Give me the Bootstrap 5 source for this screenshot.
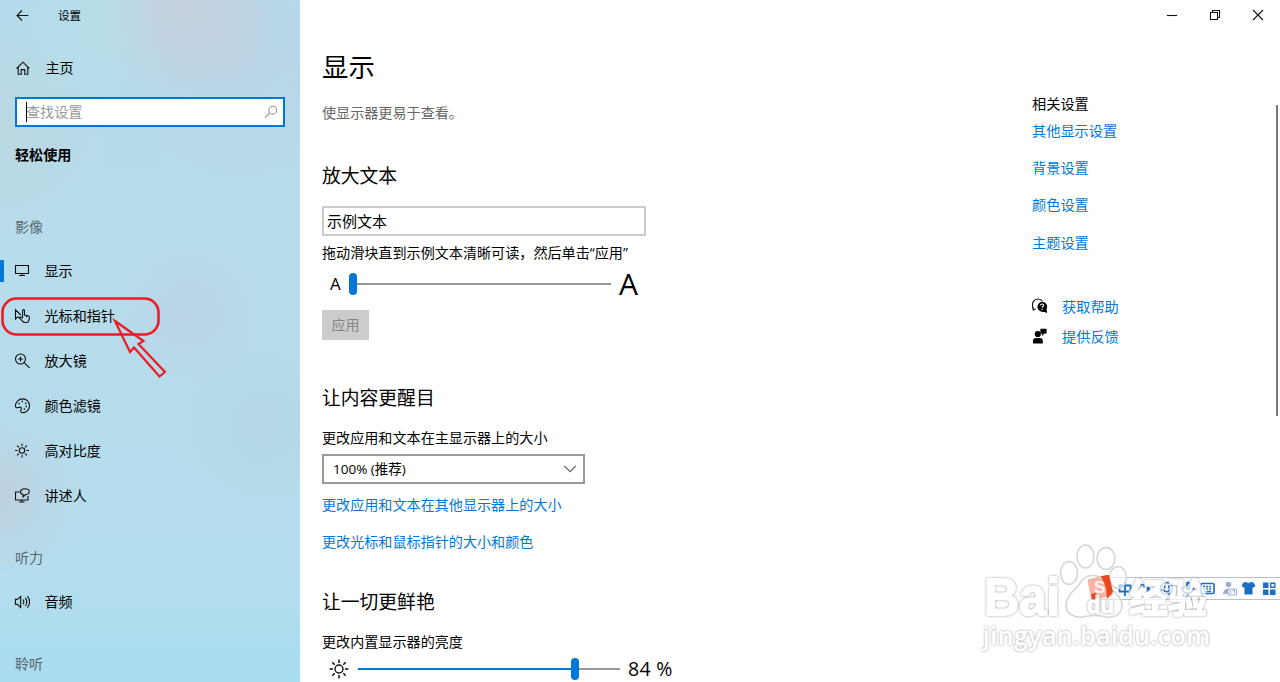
<!DOCTYPE html>
<html lang="zh-CN">
<head>
  <meta charset="UTF-8" />
  <title>设置</title>
  <meta name="viewport" content="width=device-width, initial-scale=1.0" />
  <link href="https://cdn.jsdelivr.net/npm/bootstrap@5.3.0/dist/css/bootstrap.min.css" rel="stylesheet" />
  <style>
    body { font-family: "Open Sans", "Noto Sans CJK SC", sans-serif; font-size: 14.1px; color: #000; background: #fff; height: 682px; }
    svg { display: block; flex: none; fill: none; stroke: #111; stroke-width: 1.1; }
    a { color: #0078d7; text-decoration: none; }

    .side {
      width: 300px; flex: none;
      background:
        radial-gradient(circle 95px at 185px 8px, #cdcbdaaa, #cdcbda00),
        radial-gradient(ellipse 130px 130px at 240px 60px, #bfcfe088, #bfcfe000),
        radial-gradient(circle 90px at 95px 25px, #b9e4e577, #b9e4e500),
        radial-gradient(circle 80px at 0 495px, #c2c9d8aa, #c2c9d800),
        radial-gradient(circle 75px at 190px 315px, #bccde4aa, #bccde400),
        radial-gradient(circle 110px at 0 125px, #bfd6dcaa, #bfd6dc00),
        radial-gradient(circle 90px at 265px 425px, #b1d3e2aa, #b1d3e200),
        linear-gradient(#b3daeb, #b7dceb 40%, #b4dded 85%, #a7dcef);
    }
    .side > * { flex-shrink: 0; }
    .titlebar { height: 30px; font-size: 11.6px; padding: 1px 0 0 16px; gap: 29px; }
    .side-home { height: 30px; margin-top: 23px; padding-left: 16px; gap: 15.5px; }
    .search { margin: 14px 15px 0; height: 30px; border: 2px solid #0078d7; }
    .search svg { stroke: #999; margin-right: 5px; }
    .search .form-control { font-size: 14.1px; color: #999; padding: 0 0 0 9px; line-height: 26px; }
    .search .form-control::placeholder { color: #999; }
    .caret { left: 9px; top: 3px; width: 1px; height: 20px; background: #000; }
    .side-title { height: 30px; line-height: 30px; margin: 13px 0 42px 15px; }
    .group { height: 30px; line-height: 30px; padding-left: 15px; color: #58666d; margin-bottom: 6px; }
    .entries { margin-bottom: 25px; }
    .entry { height: 45px; padding-left: 14px; gap: 13.5px; color: #000; position: relative; }
    .entry.active::before { content: ""; position: absolute; left: 0; top: 12px; width: 4px; height: 22px; background: #0078d7; }

    .pane { width: 710px; padding: 48px 0 0 22px; flex: none; }
    .pane h1 { font-size: 26.4px; line-height: 39px; height: 39px; font-weight: 400; margin: 0 0 14px; }
    .pane h2 { font-size: 18.8px; line-height: 30px; height: 30px; font-weight: 400; margin: 0; }
    .pane section { margin-bottom: 43px; }
    .line { height: 24px; line-height: 23px; white-space: nowrap; }
    .pane .links a { line-height: 22px; }
    .pane .hint { line-height: 22px; }
    .lede { color: #666; margin-bottom: 36px; }
    .sample { width: 324px; height: 30px; border: 2px solid #ccc; font-size: 15px; line-height: 27px; padding-left: 3px; margin: 15px 0 6px; }
    .slider { height: 30px; }
    .text-size { margin: 3px 0 11px; }
    .small-a { width: 27px; padding-left: 8px; font-size: 17px; }
    .big-a { margin-left: 8px; font-size: 30px; line-height: 30px; }
    .track { width: 262px; height: 2px; background: #999; position: relative; }
    .track-fill { height: 2px; background: #0078d7; }
    .knob { position: absolute; top: -10px; width: 8px; height: 22px; border-radius: 4px; background: #0078d7; }
    .sun { margin: 0 9px 0 7px; }
    .percent { margin-left: 8px; font-size: 19.5px; letter-spacing: .3px; }
    .apply { width: 47px; height: 30px; padding: 0; border: 0; border-radius: 0; background: #ccc; color: #858585; font-size: 14.1px; line-height: 30px; }
    .caption { margin-top: 13px; }
    .combo { width: 262.5px; height: 30px; border: 2px solid #999; padding: 0 6px 0 9px; font-size: 13.5px; margin: 4px 0 10px; }
    .combo svg { stroke: #666; }
    .pane .links { margin-bottom: 32px; }

    .related { padding: 92px 0 0 22px; width: 266px; flex: none; font-size: 14.2px; }
    .related .first { margin: 3px 0 13px; }
    .related .last { margin-top: 14px; }
    .help { margin-top: 39px; }
    .help a { gap: 14px; }
    .scroll-thumb { width: 2px; height: 311px; margin-top: 105px; background: #7a7a7a; }
    .win-btns { right: 0; top: 0; height: 30px; gap: 31px; padding-right: 16px; }
    .over { left: 0; top: 0; pointer-events: none; }
    .marker { stroke: #ed1c24; }
    .ime { right: 0; top: 577px; width: 181px; height: 23px; border-top: 1px solid #b9bfd0; border-bottom: 1px solid #b9bfd0; background: #fff; }
    .ime svg { fill: #1a6fc4; stroke: none; }
    .stamp { stroke: none; }
    .stamp .glow { filter: drop-shadow(0 0 .9px #777); opacity: .75; fill: #fff; stroke: #fff; }
  </style>
</head>
<body class="d-flex overflow-hidden position-relative">

<aside class="side d-flex flex-column">
  <div class="titlebar d-flex align-items-center">
    <svg width="13" height="12" viewBox="0 0 13 12"><path d="M12.3 5.500H1M6 .5l-5 5 5 5"/></svg>
    <span>设置</span>
  </div>
  <a href="#" class="side-home d-flex align-items-center text-black">
    <svg width="14" height="14" viewBox="0 0 14 14"><path d="M.6 7.5 7 1.2l6.4 6.3M2.2 6v7.2h3V8.6h3.6v4.6h3V6"/></svg>
    <span>主页</span>
  </a>
  <div class="search d-flex align-items-center bg-white position-relative">
    <input class="form-control border-0 rounded-0 shadow-none bg-transparent" placeholder="查找设置" />
    <span class="caret position-absolute"></span>
    <svg width="14" height="14" viewBox="0 0 14 14"><circle cx="8.7" cy="5.2" r="3.9"/><path d="M5.8 8 1 12.7"/></svg>
  </div>
  <div class="side-title fw-bold">轻松使用</div>

  <div class="group">影像</div>
  <nav class="entries d-flex flex-column">
    <a href="#" class="entry active d-flex align-items-center">
      <svg width="17" height="16" viewBox="0 0 17 16"><path d="M1.500 2.500h13v8h-13zM8 10.500v2M5 12.500h6"/></svg>
      显示
    </a>
    <a href="#" class="entry d-flex align-items-center">
      <svg width="17" height="16" viewBox="0 0 17 16"><path d="M5 9 3.600 9 1.500 11V1.800L6.800 7M8.600 9.600V2.800c0-1.600 1.900-1.600 1.900 0V7l3.600.8c1.200.3 1.500 1 1.300 2l-.6 2.800c-.3 1.300-1 1.900-2.200 1.900h-1.900c-1 0-1.600-.5-2.200-1.300L5.300 9.900c.7-1.200 2-.9 3.300.4M12.500 7.600v1.600"/></svg>
      光标和指针
    </a>
    <a href="#" class="entry d-flex align-items-center">
      <svg width="17" height="16" viewBox="0 0 17 16"><circle cx="6.500" cy="6" r="5"/><path d="m10.200 9.700 5.500 5.500M6.500 3.400v5.200M3.900 6h5.200"/></svg>
      放大镜
    </a>
    <a href="#" class="entry d-flex align-items-center">
      <svg width="17" height="16" viewBox="0 0 17 16"><path d="M1.400 7.600C1.700 3.700 4.800.9 8.600.9c4 0 6.900 3 6.900 6.800s-3 6.900-6.500 6.900c-2.200 0-2.800-1.500-1.900-3 .7-1.300 0-2.700-1.500-2.400-1.800.4-4.400 1.500-4.200-1.600z"/><path d="M4.400 5.400h1.400M7.600 3.500H9M11 5.400h1.400M11.500 8.500h1.400M9.700 11.200h1.400" stroke-width="1.500"/></svg>
      颜色滤镜
    </a>
    <a href="#" class="entry d-flex align-items-center">
      <svg width="17" height="16" viewBox="0 0 17 16"><circle cx="8" cy="7.500" r="2.700"/><path d="M8 .5v2.600M8 12v2.600M1 7.500h2.600M12.400 7.500H15M3.100 2.600l1.800 1.800M11.100 10.600l1.800 1.800M12.900 2.600l-1.800 1.800M4.900 10.600l-1.800 1.800"/></svg>
      高对比度
    </a>
    <a href="#" class="entry d-flex align-items-center">
      <svg width="17" height="16" viewBox="0 0 17 16"><path d="M5.600 4H1.500v8h12.500V8M7.800 12v2M5 14h5.600M9.100 9V6.500C5.200 5.600 5.700.8 10.500.8c6.400 0 6.200 5.500.9 5.800z"/></svg>
      讲述人
    </a>
  </nav>
  <div class="group">听力</div>
  <nav class="entries">
    <a href="#" class="entry d-flex align-items-center">
      <svg width="17" height="16" viewBox="0 0 17 16"><path d="M1.400 5.400h2l3.300-3v11l-3.300-3h-2zM9 5.500c1 1.500 1 3.300 0 4.800M11.200 3.800c2 2.500 2 5.700 0 8.200M13.400 2.200c2.700 3.500 2.700 7.900 0 11.400"/></svg>
      音频
    </a>
  </nav>
  <div class="group">聆听</div>
</aside>

<main class="pane">
  <h1>显示</h1>
  <div class="line lede">使显示器更易于查看。</div>

  <section>
    <h2>放大文本</h2>
    <div class="sample">示例文本</div>
    <div class="line hint">拖动滑块直到示例文本清晰可读，然后单击“应用”</div>
    <div class="slider text-size d-flex align-items-center">
      <span class="small-a">A</span>
      <div class="track"><span class="knob start-0"></span></div>
      <span class="big-a">A</span>
    </div>
    <button class="apply btn d-block">应用</button>
  </section>

  <section class="links">
    <h2>让内容更醒目</h2>
    <div class="line caption">更改应用和文本在主显示器上的大小</div>
    <div class="combo d-flex align-items-center justify-content-between">
      <span>100% (推荐)</span>
      <svg width="14" height="8" viewBox="0 0 14 8"><path d="m1.300 1 5.700 5.700L12.700 1"/></svg>
    </div>
    <a href="#" class="line d-block">更改应用和文本在其他显示器上的大小</a>
    <a href="#" class="line d-block caption">更改光标和鼠标指针的大小和颜色</a>
  </section>

  <section>
    <h2>让一切更鲜艳</h2>
    <div class="line caption">更改内置显示器的亮度</div>
    <div class="slider d-flex align-items-center">
      <svg class="sun" width="20" height="20" viewBox="0 0 20 20"><circle cx="10" cy="10" r="4" stroke-width="1.400"/><path stroke-width="1.500" d="M10 .5V4M10 16v3.500M.5 10H4M16 10h3.500M3.300 3.300l2.400 2.400M14.300 14.300l2.400 2.400M16.700 3.300l-2.400 2.400M5.700 14.300l-2.400 2.400"/></svg>
      <div class="track"><div class="track-fill" style="width: 84%"></div><span class="knob" style="left: 213px"></span></div>
      <span class="percent">84 %</span>
    </div>
  </section>
</main>

<section class="related">
  <div class="line">相关设置</div>
  <a href="#" class="line first d-block">其他显示设置</a>
  <a href="#" class="line d-block">背景设置</a>
  <a href="#" class="line d-block caption">颜色设置</a>
  <a href="#" class="line last d-block">主题设置</a>
  <div class="help">
    <a href="#" class="line d-flex align-items-center">
      <svg width="16" height="16" viewBox="0 0 16 16"><path d="M1.200 11.500.8 9.800C-.4 4.500 2 1 6 1c2 0 3.500.9 4.300 2.300M1.200 9v3l2.500-1"/><path d="M10.100 3.700a5.100 5.100 0 0 1 4.400 7.600l.7 3.700-3.300-1.300a5.100 5.100 0 1 1-1.800-10z" fill="#000" stroke="none"/><path d="M8.500 7.400c.1-2 3.400-1.800 3.100.1-.2 1-1.500 1-1.500 2.200M10.100 10.800V12" stroke="#fff"/></svg>
      获取帮助
    </a>
    <a href="#" class="line d-flex align-items-center mt-1 pt-1">
      <svg width="16" height="16" viewBox="0 0 16 16"><g fill="#000" stroke="none"><circle cx="5.800" cy="6" r="3.100"/><path d="M1 15.500v-2.700C1 11 2.400 10 4 10h3.800c1.700 0 3 1 3 2.800v2.700zM8.400.8h6.200v4.800h-2.200L10 8V5.600H8.400z"/></g></svg>
      提供反馈
    </a>
  </div>
</section>
<div class="scroll-thumb"></div>

<div class="win-btns position-absolute d-flex align-items-center">
  <svg width="12" height="12" viewBox="0 0 12 12"><path d="M1 6.500h10"/></svg>
  <svg width="12" height="12" viewBox="0 0 12 12"><path d="M1.500 3.500h7v7h-7zM3.500 3.500v-2h7v7h-2"/></svg>
  <svg width="12" height="12" viewBox="0 0 12 12"><path d="m1 1 10 10M11 1 1 11"/></svg>
</div>

<!-- red marker round the cursor entry -->
<svg class="over marker position-absolute" width="300" height="400" viewBox="0 0 300 400">
  <rect x="2.500" y="298.500" width="156" height="36" rx="14" stroke-width="2.600"/>
  <path d="m115 321 28.500 20-5 3 26.500 28-5.500 4.500-25.500-29-4 4.500z" stroke-width="2.200"/>
</svg>

<!-- input method bar -->
<div class="ime position-absolute">
  <svg width="181" height="21" viewBox="0 0 181 21">
    <g fill="none" stroke="#1a6fc4" stroke-width="1.800">
      <path d="M20.500 7.500h11v6h-11zM26 4v14"/>
      <circle cx="43.500" cy="8" r="1.500" stroke-width="1.500"/>
      <circle cx="67.500" cy="10.500" r="6" stroke-width="1.600"/>
      <path d="M64.500 11.500c1 3 5 3 6 0" stroke-width="1.300"/>
      <path d="M83 9c0 8 10 8 12 1M89 15v3" stroke-width="1.600"/>
      <rect x="102" y="5.500" width="13" height="10" rx="1" stroke-width="1.600"/>
      <path d="M104 8.500h9M104 11h9" stroke-width="1.300" stroke-dasharray="2 1"/><path d="M105 13.500h7" stroke-width="1.300"/>
    </g>
    <path d="M47.500 10.500a1.800 1.800 0 1 1 3 1.500l-2 2.200zM65 7.500h1.500v3H65zM69 7.500h1.500v3H69z"/>
    <rect x="87" y="3.500" width="4.500" height="9" rx="2.200"/>
    <g fill="#9eb0cf"><circle cx="129.500" cy="6.500" r="2.800"/><path d="M124 16c0-7 10-7 10 0z"/><rect x="129" y="11" width="8.500" height="6" rx="1" fill="#fff" stroke="#9eb0cf"/><path d="M131.500 12.500v3M133.500 12.500h2v3" fill="none" stroke="#9eb0cf"/></g>
    <path d="m144.500 4.500 3-.5c1 1.500 3 1.500 4 0l3 .5 2 3.500-3 2v6.500h-8V10l-3-2z"/>
    <path d="M164 4.500h5.500V10H164zM164 11.500h5.500V17H164zM171 11.500h5.500V17H171z"/><path d="M171.700 5.200h4.100v4.100h-4.100z" fill="none" stroke="#1a6fc4" stroke-width="1.400"/>
  </svg>
</div>

<!-- watermark over the bar -->
<svg class="over stamp position-absolute" width="1280" height="682" viewBox="0 0 1280 682" font-family="Liberation Sans, Noto Sans CJK SC, sans-serif">
  <rect x="1089" y="577" width="22" height="21" rx="2" fill="#e8481c" transform="rotate(-12 1100 587)"/>
  <g fill="#fff" fill-opacity=".6" stroke="#d4d4d4" stroke-width="1.500">
    <ellipse cx="1069" cy="573" rx="8.500" ry="11.500"/>
    <ellipse cx="1085.500" cy="556.500" rx="8.500" ry="11.500"/>
    <ellipse cx="1106" cy="558.500" rx="9" ry="11"/>
    <ellipse cx="1118" cy="577.500" rx="8.500" ry="11"/>
    <path d="M1080 583c6-10 20-10 26 0 5 8 16 12 16 22 0 9-7 13-15 12-8-2-17-2-25 0-9 1-16-4-16-12 0-10 9-14 14-22z"/>
  </g>
  <path d="M1101 576l8-1 4 17-6 7-1-11zM1091 594l5-1 1 5-5 2z" fill="#e8481c"/>
  <text x="1094" y="593" font-size="17" font-weight="700" fill="#fff" fill-opacity=".9">S</text>
  <g class="glow" font-weight="700" stroke-width="1.800" stroke-linejoin="round">
    <text x="984" y="615" font-size="51" textLength="76" lengthAdjust="spacingAndGlyphs">Bai</text>
    <text x="1087" y="613" font-size="24" textLength="27" lengthAdjust="spacingAndGlyphs" stroke-width="1">du</text>
    <text x="1129" y="612" font-size="39" textLength="78">经验</text>
  </g>
  <text class="glow" x="983" y="645" font-size="25" font-family="Open Sans" font-weight="600" textLength="227" stroke-width=".3">jingyan.baidu.com</text>
</svg>

<script src="https://cdn.jsdelivr.net/npm/bootstrap@5.3.0/dist/js/bootstrap.bundle.min.js"></script>
</body>
</html>
